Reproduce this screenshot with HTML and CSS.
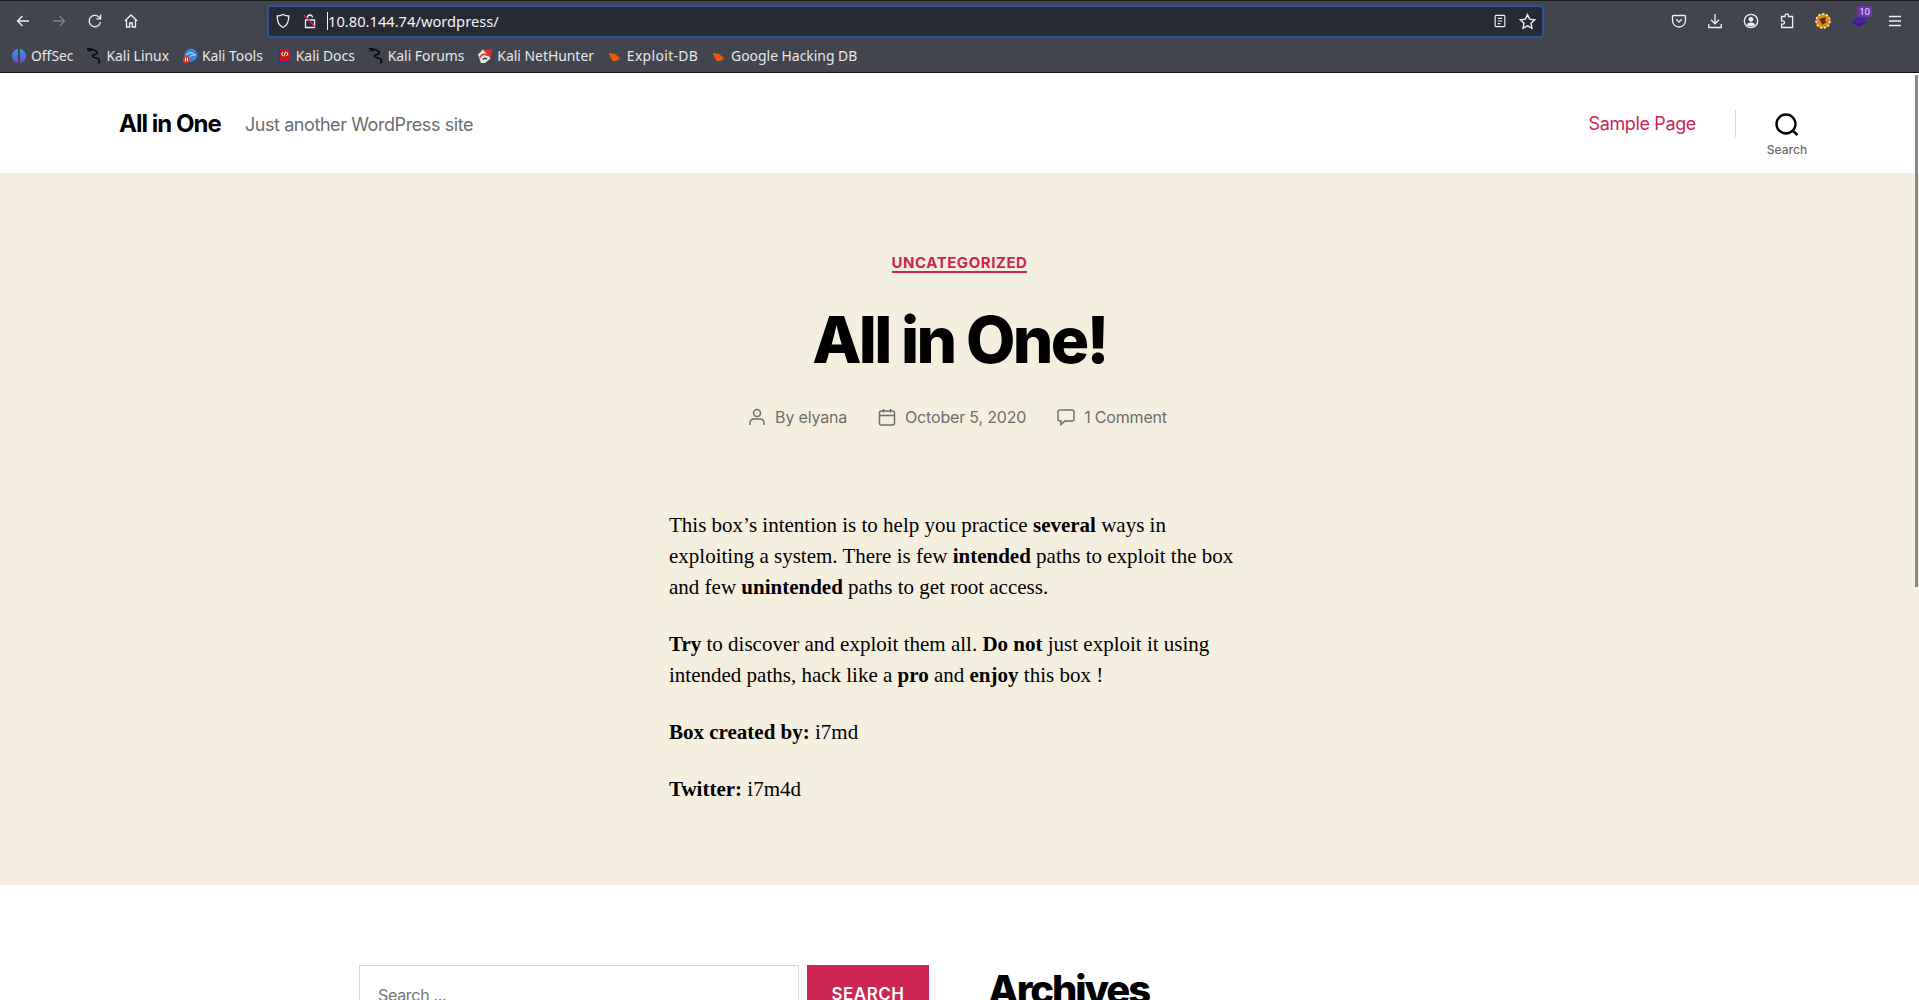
FILE: index.html
```html
<!DOCTYPE html>
<html lang="en">
<head>
<meta charset="utf-8">
<title>All in One</title>
<link rel="stylesheet" href="styles.css">
</head>
<body>
<div class="chrome">
  <div class="toolbar">
    <div class="nav">
      <svg class="ic" viewBox="0 0 16 16"><path d="M14 8H2.500M7.500 3 2.500 8l5 5"/></svg>
      <svg class="ic dim" viewBox="0 0 16 16"><path d="M2 8h11.500M8.500 3l5 5-5 5"/></svg>
      <svg class="ic" viewBox="0 0 16 16"><path d="M13.500 9a5.700 5.700 0 1 1-1.600-5l1.600 1.600M13.700 1.500v4.300H9.400"/></svg>
      <svg class="ic" viewBox="0 0 16 16"><path d="M1.800 8 8 2l6.200 6M3.500 7v7h3.200v-4h2.600v4h3.200V7"/></svg>
    </div>
    <div class="urlbar">
      <svg class="ic-url shield" viewBox="0 0 16 16"><path d="M8 1.500c2 1 3.800 1.500 5.800 1.500 0 5.500-1.500 9.500-5.800 11.500C3.700 12.500 2.200 8.500 2.200 3 4.200 3 6 2.500 8 1.500z"/></svg>
      <svg class="ic-url lock" viewBox="0 0 16 16"><path d="M5.500 7V4.500a2.500 2.500 0 0 1 5 0M3.500 7h9v7.500h-9z"/><path class="slash" d="M2 2l12 13"/></svg>
      <span class="url">10.80.144.74/wordpress/</span>
      <span class="url-end">
        <svg class="ic-url" viewBox="0 0 16 16"><path d="M3.500 1.500h9a1 1 0 0 1 1 1v11a1 1 0 0 1-1 1h-9a1 1 0 0 1-1-1v-11a1 1 0 0 1 1-1zM5.500 5h5M5.500 8h5M5.500 11h3"/></svg>
        <svg class="ic-star" viewBox="0 0 16 16"><path d="M8 1.500l2 4.300 4.700.6-3.400 3.300.9 4.700L8 12.100l-4.200 2.300.9-4.700L1.300 6.400 6 5.800z"/></svg>
      </span>
    </div>
    <div class="tools">
      <svg class="ic" viewBox="0 0 16 16"><path d="M2.500 2.500h11a1 1 0 0 1 1 1v4a6.500 6.500 0 0 1-13 0v-4a1 1 0 0 1 1-1zM5.200 6.200 8 9l2.800-2.800"/></svg>
      <svg class="ic" viewBox="0 0 16 16"><path d="M8 1v9.500M4 6.800l4 4 4-4M1.800 11v3.500h12.400V11"/></svg>
      <svg class="ic" viewBox="0 0 16 16"><circle cx="8" cy="8" r="6.700"/><circle class="solid" cx="8" cy="6.300" r="2.400"/><path class="solid" d="M3.800 12c.8-2 2.300-2.600 4.200-2.600s3.400.6 4.200 2.600c-2.200 1.800-6.200 1.800-8.400 0z"/></svg>
      <svg class="ic" viewBox="0 0 16 16"><path d="M6 3.500V2.800a1.800 1.800 0 0 1 3.600 0v.7h4v11h-11v-3.300h1.200a1.700 1.700 0 0 0 0-3.400H2.500V3.500z"/></svg>
      <svg class="ext" viewBox="0 0 16 16"><circle cx="8" cy="8" r="7.500" fill="#e58a15"/><circle cx="8" cy="8" r="7" fill="none" stroke="#eee" stroke-width="1.500" stroke-dasharray="2 2"/><path d="M4 6l7-2-1 4 2 1-5 3-1-3z" fill="#4a3720"/></svg>
      <span class="badge-wrap">
        <svg class="ext" viewBox="0 0 16 16"><path d="M8 3.500l7 4-7 4-7-4z" fill="#4a1f9e"/><path d="M1 9.500l2-1 5 3 5-3 2 1-7 4.500z" fill="#3b1690"/></svg>
        <span class="badge">10</span>
      </span>
      <svg class="ic" viewBox="0 0 16 16"><path d="M2 3.500h12M2 8h12M2 12.500h12"/></svg>
    </div>
  </div>
  <div class="bookmarks">
    <a class="bm"><svg class="fav" viewBox="0 0 16 16"><defs><linearGradient id="off" x1="0" y1="0" x2="0" y2="1"><stop offset="0" stop-color="#2ea6dc"/><stop offset="1" stop-color="#7a3fd0"/></linearGradient></defs><path d="M7 1C3.500 1.500 1 4.500 1 8s2.500 6.500 6 7z" fill="url(#off)"/><path d="M9 1c3.500.5 6 3.500 6 7s-2.500 6.500-6 7z" fill="url(#off)"/></svg>OffSec</a>
    <a class="bm"><svg class="fav wide" viewBox="0 0 18 18"><path class="dragon" d="M1 1.500c3-.5 5 .5 7 1.500 2.500 1 4.500 2.500 2.500 4-2 1-4.500.5-4 2.500 1.500 1.500 5 1 6.500 3 1 1.500.5 3-.5 4M1.500 3.500c1.500-.5 3 0 4 .5"/></svg>Kali Linux</a>
    <a class="bm"><svg class="fav" viewBox="0 0 16 16"><circle cx="9" cy="7" r="6.500" fill="#3b82e0"/><path d="M4 7c3-3 7-3 9 0M7 10c2-3 4-3 7-3" stroke="#d6e7fb" fill="none"/><circle cx="4.500" cy="11.500" r="3.500" fill="#e0403a"/><path d="M3.500 10v3M5.500 10v3" stroke="#fff"/></svg>Kali Tools</a>
    <a class="bm"><svg class="fav" viewBox="0 0 16 16"><rect x="2" y="1" width="12" height="14" fill="#c4161c"/><rect x="2" y="1" width="2" height="14" fill="#263a8a"/><rect x="2" y="13" width="12" height="2" fill="#263a8a"/><path d="M7 4 5.500 6 7 8M10.500 4 12 6l-1.500 2M9.500 3.500 8 8.500" stroke="#fff" fill="none"/></svg>Kali Docs</a>
    <a class="bm"><svg class="fav wide" viewBox="0 0 18 18"><path class="dragon" d="M1 1.500c3-.5 5 .5 7 1.500 2.500 1 4.500 2.500 2.500 4-2 1-4.500.5-4 2.500 1.500 1.500 5 1 6.500 3 1 1.500.5 3-.5 4M1.500 3.500c1.500-.5 3 0 4 .5"/></svg>Kali Forums</a>
    <a class="bm"><svg class="fav" viewBox="0 0 16 16"><path d="M6 1.500h9.500l-2 9z" fill="#e02b2b"/><path d="M1 6.500 6 1.500l7.500 9L8 15H4z" fill="#e8e8e8"/><path d="M3 9.500c1.500-3.500 5-4 8-2" stroke="#d8352c" stroke-width="1.800" fill="none"/><path d="M6 11.500c1-1.500 2.500-1.500 4-.5" stroke="#33343a" stroke-width="1.500" fill="none"/></svg>Kali NetHunter</a>
    <a class="bm"><svg class="fav" viewBox="0 0 16 16"><path d="M2 5l5 .5 6 4-1.500 2.500-5 1.500L3.500 10z" fill="#e8590c"/></svg><span class="spaced">Exploit-DB</span></a>
    <a class="bm"><svg class="fav" viewBox="0 0 16 16"><path d="M2 5l5 .5 6 4-1.500 2.500-5 1.500L3.500 10z" fill="#e8590c"/></svg>Google Hacking DB</a>
  </div>
</div>
<div class="viewport">
  <div class="page">
    <header class="site-header">
      <div class="brand">
        <span class="site-title">All in One</span>
        <span class="tagline">Just another WordPress site</span>
      </div>
      <div class="header-right">
        <a class="menu-link">Sample Page</a>
        <span class="sep"></span>
        <div class="search-toggle">
          <svg class="search-ic" viewBox="0 0 24 24"><circle cx="11" cy="11" r="9.500"/><path d="M18 18l4.500 4"/></svg>
          <span class="search-label">Search</span>
        </div>
      </div>
    </header>
    <main class="hero">
      <a class="cat">UNCATEGORIZED</a>
      <h1 class="post-title">All in One!</h1>
      <div class="meta">
        <span class="meta-item"><svg class="meta-ic" viewBox="0 0 18 18"><circle cx="9" cy="5" r="3.500"/><path d="M2 17v-2.500A4 4 0 0 1 6 11h6a4 4 0 0 1 4 3.500V17"/></svg>By elyana</span>
        <span class="meta-item"><svg class="meta-ic" viewBox="0 0 18 18"><rect x="1.500" y="3" width="15" height="14" rx="2"/><path d="M1.500 7.500h15M5.500 1v3.500M12.500 1v3.500"/></svg>October 5, 2020</span>
        <span class="meta-item"><svg class="meta-ic" viewBox="0 0 18 18"><path d="M3 2h12a2 2 0 0 1 2 2v7a2 2 0 0 1-2 2H8l-4 3.500V13H3a2 2 0 0 1-2-2V4a2 2 0 0 1 2-2z"/></svg>1 Comment</span>
      </div>
      <div class="content">
        <p>This box’s intention is to help you practice <b>several</b> ways in exploiting a system. There is few <b>intended</b> paths to exploit the box and few <b>unintended</b> paths to get root access.</p>
        <p><b>Try</b> to discover and exploit them all. <b>Do not</b> just exploit it using intended paths, hack like a <b>pro</b> and <b>enjoy</b> this box !</p>
        <p><b>Box created by:</b> i7md</p>
        <p><b>Twitter:</b> i7m4d</p>
      </div>
    </main>
    <section class="widgets">
      <div class="search-form">
        <div class="search-input">Search ...</div>
        <div class="search-btn">SEARCH</div>
      </div>
      <h2 class="widget-title">Archives</h2>
    </section>
  </div>
  <span class="thumb"></span>
</div>
</body>
</html>
```
FILE: styles.css
```css
* { box-sizing: border-box; }
html, body { margin: 0; height: 1000px; overflow: hidden; background: #fff; }
body { display: flex; flex-direction: column; font-family: Inter, sans-serif; }

.chrome { height: 73px; flex: none; background: #42454d; border-top: 1px solid #16171a; border-bottom: 1px solid #121316; color: #fbfbfe; }
.toolbar { height: 35px; display: flex; align-items: center; position: relative; }
.ic, .ic-url, .ic-star { fill: none; stroke: #f0f0f4; stroke-width: 1.300; }
.ic { width: 16px; height: 16px; flex: none; }
.ic .solid { fill: #f0f0f4; stroke: none; }
.ic.dim { stroke: #80838a; }
.nav { width: 267px; flex: none; display: flex; gap: 20px; padding-left: 15px; padding-top: 4px; }
.urlbar { width: 1277px; height: 33px; margin-top: 5px; flex: none; display: flex; align-items: center; background: #272a35; border: 2px solid #2a5298; border-radius: 4px; padding: 0 6px 0 6px; }
.ic-url { width: 16px; height: 16px; flex: none; margin-right: 11px; }
.ic-url.lock { margin-right: 9px; }
.ic-url .slash { stroke: #e0245e; }
.url { font: 14.700px "Noto Sans", sans-serif; color: #f4f4f6; border-left: 1px solid #f4f4f6; line-height: 18px; }
.url-end { margin-left: auto; display: flex; align-items: center; gap: 12px; }
.url-end .ic-url { margin-right: 0; width: 14px; height: 14px; }
.ic-star { width: 17px; height: 17px; }
.tools { flex: 1; display: flex; align-items: center; gap: 20px; padding-left: 127px; padding-top: 4px; }
.ext { width: 16px; height: 16px; flex: none; display: block; }
.badge-wrap { position: relative; display: block; }
.badge { position: absolute; top: -7px; right: -5px; background: #6a35b5; color: #e8e0f5; font: 9.500px/11px "Noto Sans", sans-serif; padding: 0 2px; border-radius: 2px; }

.bookmarks { height: 36px; display: flex; align-items: center; padding: 3px 0 0 11px; gap: 12.900px; }
.bm { display: flex; align-items: center; gap: 4px; font: 13.900px "Noto Sans", sans-serif; color: #e8e8ec; }
.spaced { letter-spacing: 0.35px; }
.fav { width: 16px; height: 16px; flex: none; }
.fav.wide { width: 18px; height: 18px; margin-right: -2px; }
.dragon { fill: none; stroke: #08080a; stroke-width: 1.500; }

.viewport { flex: 1; position: relative; overflow: hidden; }
.page { width: 100%; }
.thumb { position: absolute; top: 2px; right: 1px; width: 3px; height: 512px; background: #868985; }

.site-header { height: 100px; display: flex; align-items: center; justify-content: space-between; padding: 0 112px 0 119px; }
.brand { display: flex; align-items: flex-start; gap: 24px; }
.site-title { font-size: 24px; font-weight: 700; letter-spacing: -0.96px; color: #000; }
.tagline { font-size: 18px; font-weight: 400; color: #6d6d6d; letter-spacing: -0.42px; margin-top: 5px; }
.header-right { display: flex; align-items: center; }
.menu-link { font-size: 18px; color: #cd2653; letter-spacing: -0.36px; padding-top: 1px; }
.sep { width: 1px; height: 27px; background: #dcd7ca; margin: 0 31px 0 39px; }
.search-toggle { display: flex; flex-direction: column; align-items: center; gap: 5px; padding-top: 23px; width: 40px; }
.search-ic { width: 24px; height: 24px; fill: none; stroke: #000; stroke-width: 2.400; }
.search-label { font-size: 12px; font-weight: 500; color: #6d6d6d; }

.hero { height: 712px; background: #f5efe0; display: flex; flex-direction: column; align-items: center; padding-top: 82px; }
.cat { font-size: 15px; font-weight: 700; letter-spacing: 0.54px; color: #cd2653; border-bottom: 2px solid #cd2653; line-height: 15px; padding-bottom: 1px; }
.post-title { margin: 31px 0 0; font-size: 64px; line-height: 72px; font-weight: 800; letter-spacing: -2.66px; color: #000; }
.meta { display: flex; gap: 31px; margin-top: 31px; padding-right: 4px; font-size: 16px; color: #6d6d6d; letter-spacing: -0.18px; }
.meta-item { display: flex; align-items: center; gap: 9px; }
.meta-ic { width: 18px; height: 18px; fill: none; stroke: #6d6d6d; stroke-width: 1.500; }
.content { width: 580px; margin: 83px 1px 0 0; font-family: "Liberation Serif", serif; font-size: 21px; line-height: 31px; color: #000; }
.content p { margin: 0 0 26px; }

.widgets { display: flex; padding: 80px 0 0 359px; align-items: flex-start; }
.search-form { display: flex; gap: 8px; width: 570px; }
.search-input { width: 440px; height: 70px; border: 1px solid #dcd7ca; padding: 19px 18px; font-size: 16px; letter-spacing: -0.3px; color: #757575; }
.search-btn { width: 122px; height: 70px; background: #cd2653; color: #fff; font-size: 17px; font-weight: 600; letter-spacing: 0.5px; text-align: center; padding-top: 19px; }
.widget-title { margin: 5px 0 0 59px; font-size: 40px; line-height: 40px; font-weight: 800; letter-spacing: -2.100px; color: #000; }
```
